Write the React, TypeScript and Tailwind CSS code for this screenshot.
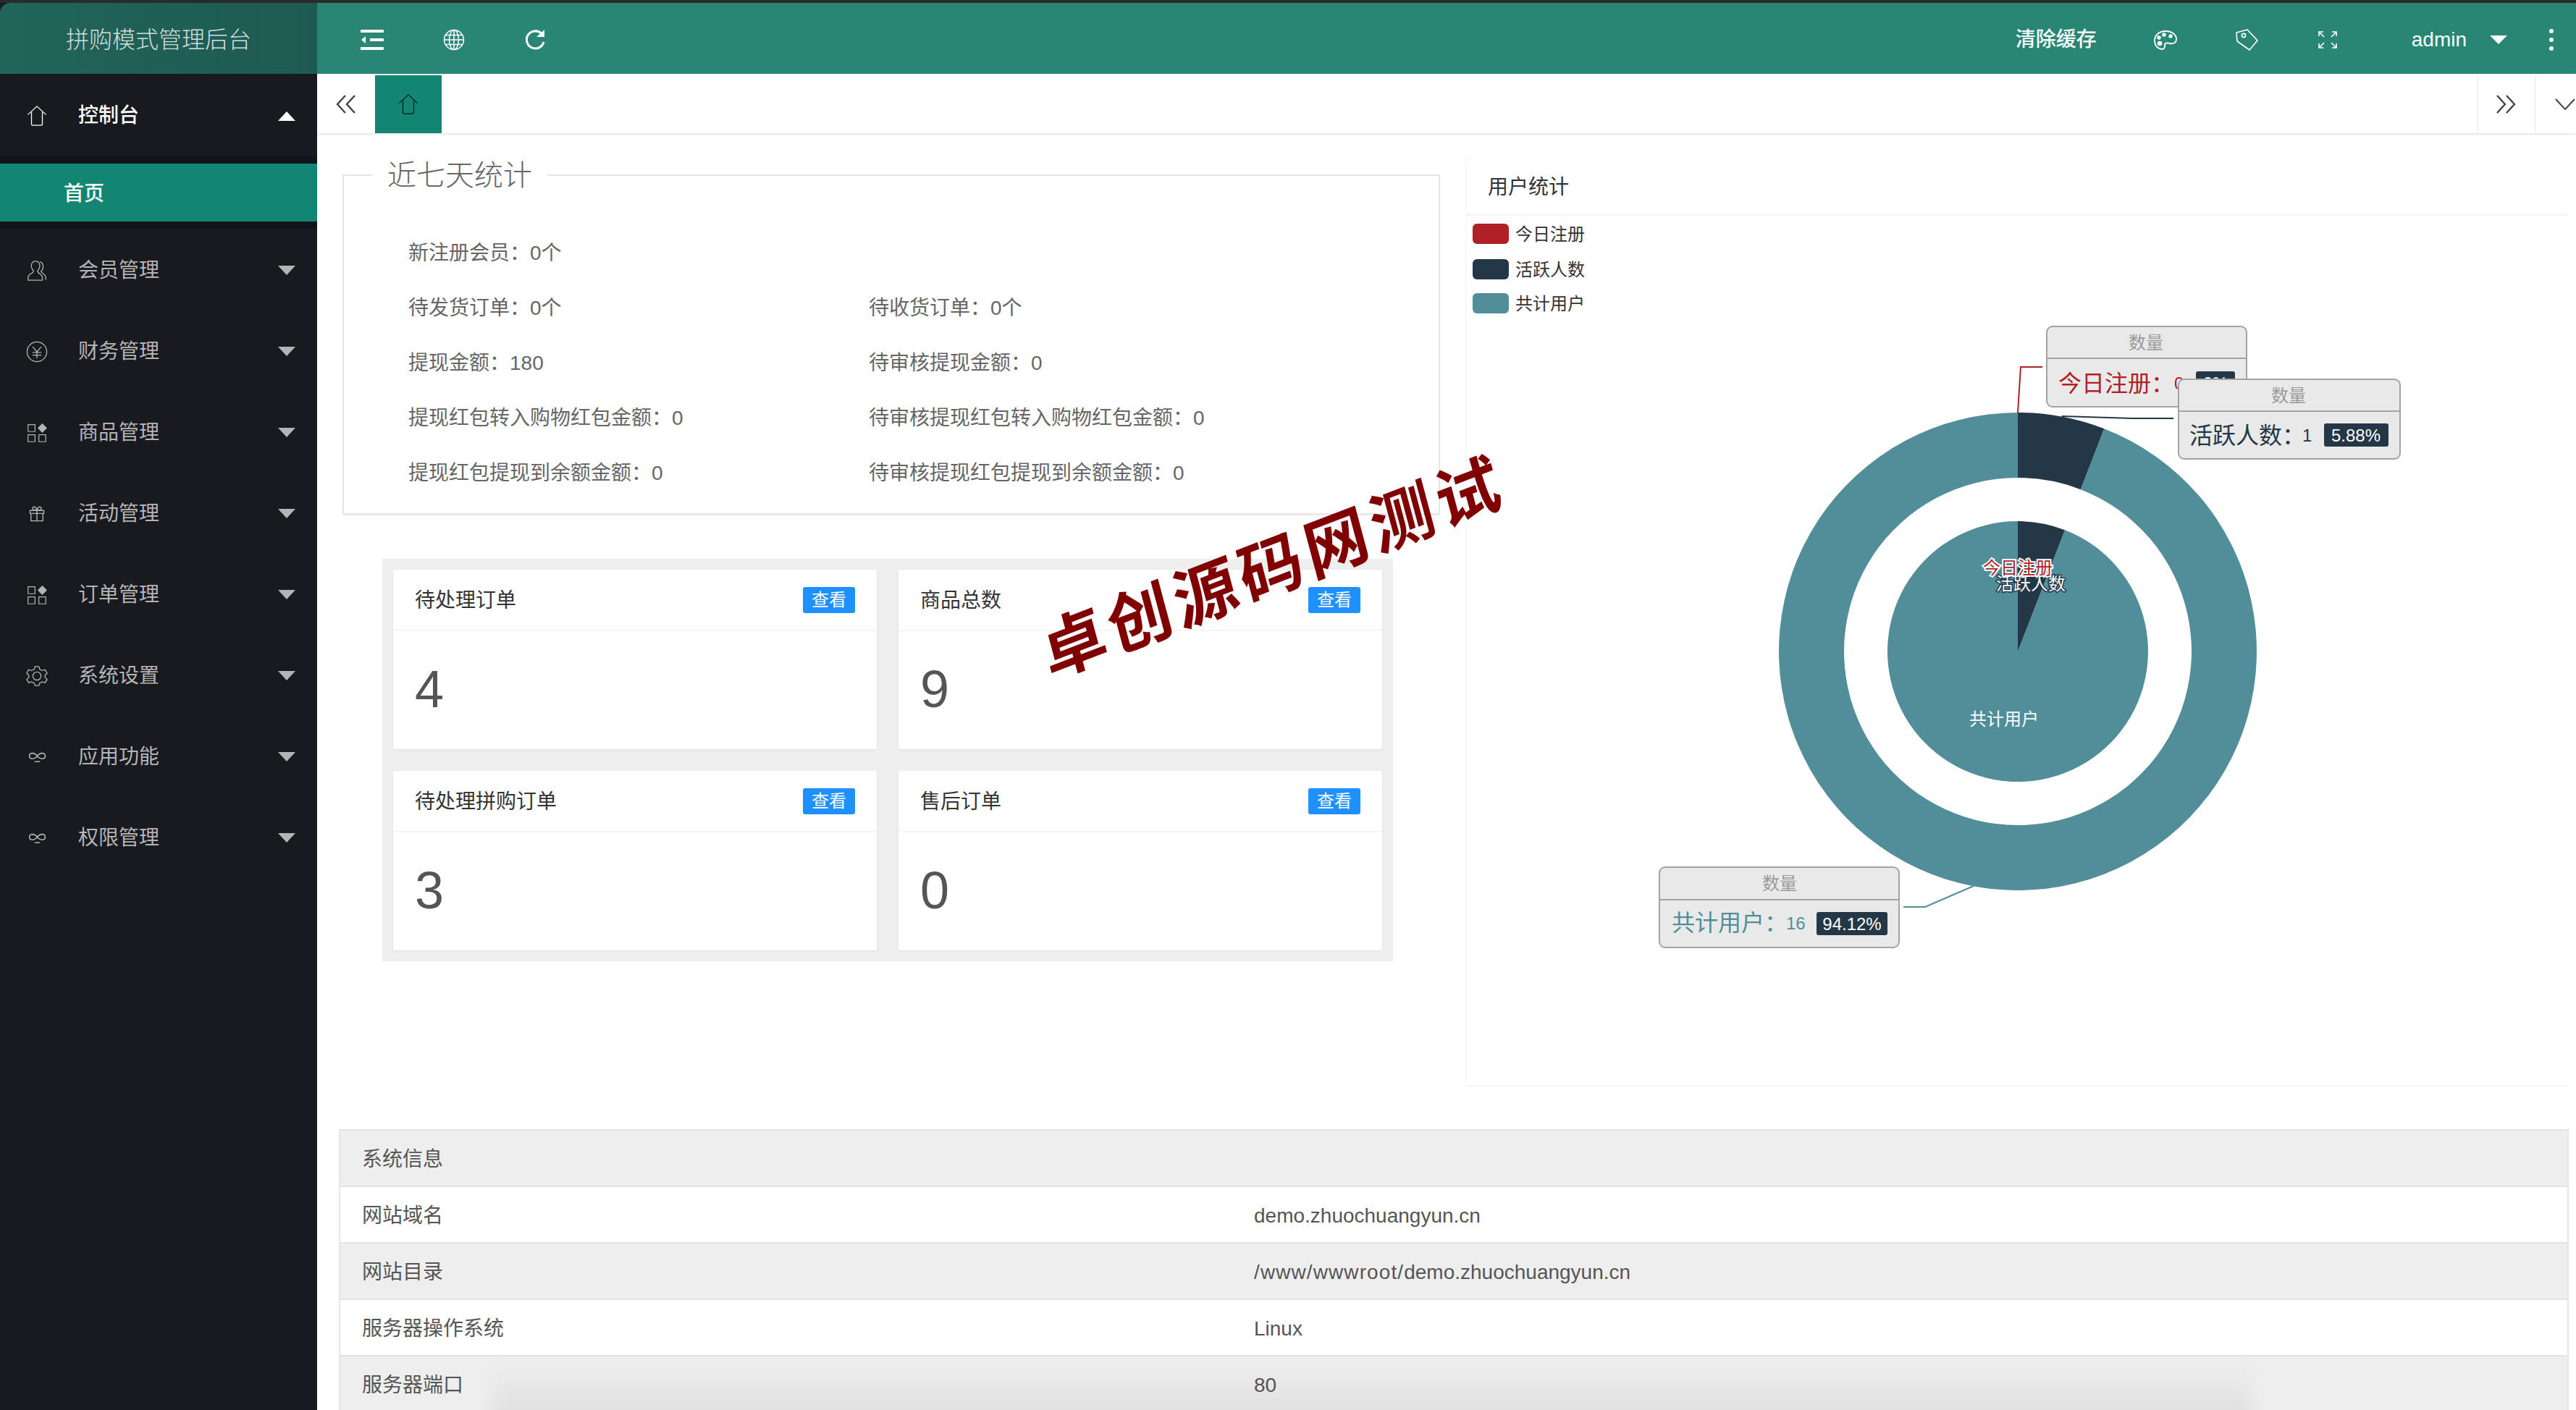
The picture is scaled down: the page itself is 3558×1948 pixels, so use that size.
import React from "react";

const S = { fill: "none", stroke: "currentColor", strokeWidth: 1.4, strokeLinejoin: "round" as const, strokeLinecap: "round" as const };

function HomeIcon({ className }: { className: string }) {
  return (
    <svg viewBox="0 0 32 32" className={className} {...S}>
      <path d="M3 14 L16 2 L29 14 M8 11 V28 Q8 30 10 30 H22 Q24 30 24 28 V11" />
    </svg>
  );
}
function UsersIcon() {
  return (
    <svg viewBox="0 0 32 32" className="w-[30px] h-[30px]" {...S}>
      <path d="M3 30 Q2 24 6 21 Q11 19 11 16 Q7 12 8 7 Q9 2 14 2 Q19 2 20 7 Q21 12 17 16 Q17 19 21 21 Q25 24 24 30 Z" />
      <path d="M21 3 Q26 5 25 12 Q24 16 22 17 Q23 19 26 21 Q30 24 29 29" />
    </svg>
  );
}
function YenIcon() {
  return (
    <svg viewBox="0 0 32 32" className="w-[30px] h-[30px]" {...S}>
      <circle cx="16" cy="16" r="14.5" />
      <path d="M10 9 L16 16 L22 9 M16 16 V25 M10 17 H22 M10 21 H22" />
    </svg>
  );
}
function AppsIcon() {
  return (
    <svg viewBox="0 0 32 32" className="w-[28px] h-[28px]" {...S}>
      <rect x="2" y="3" width="11" height="11" />
      <rect x="2" y="19" width="11" height="11" />
      <rect x="19" y="19" width="11" height="11" />
      <path d="M24.5 2 L31 8.5 L24.5 15 L18 8.5 Z" fill="currentColor" />
    </svg>
  );
}
function GiftIcon() {
  return (
    <svg viewBox="0 0 32 32" className="w-[22px] h-[22px]" {...S} strokeWidth={2}>
      <rect x="2" y="9" width="28" height="6" rx="1" />
      <path d="M4 15 V30 H28 V15 M16 9 V30 M16 9 Q8 9 7 5 Q8 1 12 2 Q15 4 16 9 Q17 4 20 2 Q24 1 25 5 Q24 9 16 9" />
    </svg>
  );
}
function GearIcon() {
  return (
    <svg viewBox="0 0 32 32" className="w-[30px] h-[30px]" {...S}>
      <circle cx="16" cy="16" r="6" />
      <path d="M13 2 H19 L20 6 L24 8 L28 6.5 L31 12 L28 15 V18 L31 21 L28 26 L24 24.5 L20 26.5 L19 30 H13 L12 26.5 L8 24.5 L4 26 L1 21 L4 18 V15 L1 12 L4 6.5 L8 8 L12 6 Z" />
    </svg>
  );
}
function InfinityIcon() {
  return (
    <svg viewBox="0 0 32 20" className="w-[25px] h-[16px]" {...S} strokeWidth={2}>
      <path d="M16 8 C12 2 2 1 2 8 C2 15 12 14 16 8 C20 2 30 1 30 8 C30 15 20 14 16 8" />
      <path d="M12 18 H20" />
    </svg>
  );
}

const menu: { label: string; icon: React.ReactNode }[] = [
  { label: "会员管理", icon: <UsersIcon /> },
  { label: "财务管理", icon: <YenIcon /> },
  { label: "商品管理", icon: <AppsIcon /> },
  { label: "活动管理", icon: <GiftIcon /> },
  { label: "订单管理", icon: <AppsIcon /> },
  { label: "系统设置", icon: <GearIcon /> },
  { label: "应用功能", icon: <InfinityIcon /> },
  { label: "权限管理", icon: <InfinityIcon /> },
];

function Sidebar() {
  return (
    <aside className="w-[438px] shrink-0 bg-[#181a20] flex flex-col">
      <div className="h-[98px] shrink-0 pt-[3px] bg-gradient-to-r from-[#20655a] to-[#1e5a52] rounded-tl-[14px] flex items-center pl-[91px] text-[32px] font-light text-[#d5dedc]">
        拼购模式管理后台
      </div>
      <div className="h-[113px] pt-[3px] flex items-center text-white text-[28px]">
        <span className="w-[108px] flex justify-center">
          <HomeIcon className="w-[30px] h-[30px] -ml-[6px]" />
        </span>
        <span className="flex-1 font-medium">控制台</span>
        <span className="w-0 h-0 mr-[30px] border-x-[12px] border-x-transparent border-b-[13px] border-b-white" />
      </div>
      <div className="bg-[#13141a] pt-[11px] pb-[10px]">
        <div className="h-[80px] pt-[3px] bg-[#128672] flex items-center pl-[88px] text-white text-[28px] font-medium">首页</div>
      </div>
      {menu.map((m) => (
        <div key={m.label} className="h-[112px] pt-[3px] shrink-0 flex items-center text-[#b4b4b4] text-[28px]">
          <span className="w-[108px] flex justify-center">
            <span className="w-[30px] h-[30px] -ml-[6px] flex items-center justify-center">{m.icon}</span>
          </span>
          <span className="flex-1">{m.label}</span>
          <span className="w-0 h-0 mr-[30px] border-x-[12px] border-x-transparent border-t-[13px] border-t-[#b4b4b4]" />
        </div>
      ))}
    </aside>
  );
}

function Header() {
  return (
    <header className="h-[98px] shrink-0 pt-[3px] bg-[#2a8674] flex items-center text-white">
      <svg viewBox="0 0 32 28" className="ml-[60px] w-[32px] h-[28px]" fill="currentColor">
        <rect x="0" y="0" width="32" height="4" />
        <rect x="0" y="24" width="32" height="4" />
        <rect x="13" y="12" width="19" height="4" />
        <path d="M1 14 L7 9 V19 Z" />
      </svg>
      <svg viewBox="0 0 30 30" className="ml-[82px] w-[30px] h-[30px]" fill="none" stroke="currentColor" strokeWidth="1.5">
        <circle cx="15" cy="15" r="13.5" />
        <ellipse cx="15" cy="15" rx="6.5" ry="13.5" />
        <path d="M15 1.5 V28.5 M1.5 15 H28.5 M3.5 8.5 H26.5 M3.5 21.5 H26.5" />
      </svg>
      <svg viewBox="0 0 30 30" className="ml-[82px] w-[30px] h-[30px]" fill="none" stroke="currentColor" strokeWidth="3">
        <path d="M24 6.5 A12 12 0 1 0 27 18" />
        <path d="M17 11 H28 V1 Z" fill="currentColor" stroke="none" />
      </svg>
      <div className="ml-auto flex items-center">
        <span className="text-[28px] font-medium">清除缓存</span>
        <svg viewBox="0 0 32 28" className="ml-[79px] w-[32px] h-[28px]" fill="none" stroke="currentColor" strokeWidth="1.8">
          <path d="M16 2 C6 2 1 9 1 15 C1 23 7 27 11 27 C15 27 15 24 15 21 C15 18 19 18 22 19 C27 20 31 18 31 13 C31 7 25 2 16 2 Z" />
          <circle cx="8" cy="19" r="2.4" fill="currentColor" />
          <circle cx="7" cy="11" r="1.8" fill="currentColor" />
          <circle cx="14" cy="7" r="1.8" fill="currentColor" />
          <circle cx="23" cy="9" r="1.8" fill="currentColor" />
        </svg>
        <svg viewBox="0 0 32 30" className="ml-[80px] w-[32px] h-[30px]" fill="none" stroke="currentColor" strokeWidth="1.6" strokeLinejoin="round">
          <path d="M2 5 L17 1 L31 16 L20 29 L3 17 Z" />
          <circle cx="12" cy="9" r="2.6" />
        </svg>
        <svg viewBox="0 0 26 24" className="ml-[83px] w-[26px] h-[24px]" fill="none" stroke="currentColor" strokeWidth="1.6">
          <path d="M1 7 V1 H7 M1 1 L8 8 M25 7 V1 H19 M25 1 L18 8 M1 17 V23 H7 M1 23 L8 16 M25 17 V23 H19 M25 23 L18 16" />
        </svg>
        <span className="ml-[103px] text-[28px]">admin</span>
        <span className="ml-[32px] w-0 h-0 border-x-[12px] border-x-transparent border-t-[12px] border-t-white" />
        <span className="ml-[58px] mr-[31px] flex flex-col gap-[6px]">
          <i className="block w-[6px] h-[6px] rounded-full bg-white" />
          <i className="block w-[6px] h-[6px] rounded-full bg-white" />
          <i className="block w-[6px] h-[6px] rounded-full bg-white" />
        </span>
      </div>
    </header>
  );
}

function TabBar() {
  return (
    <div className="h-[82px] shrink-0 pt-[2px] bg-white flex items-stretch shadow-[0_2px_3px_rgba(0,0,0,0.1)] relative">
      <div className="w-[80px] flex items-center justify-center text-[#444]">
        <svg viewBox="0 0 28 26" className="w-[28px] h-[26px]" fill="none" stroke="currentColor" strokeWidth="2.4">
          <path d="M13 1 L2 13 L13 25 M26 1 L15 13 L26 25" />
        </svg>
      </div>
      <div className="w-[92px] bg-[#128672] flex items-center justify-center text-[#0c1a18]">
        <HomeIcon className="w-[32px] h-[30px]" />
      </div>
      <div className="ml-auto w-[80px] border-l-2 border-[#f2f2f2] flex items-center justify-center pr-[3px] text-[#444]">
        <svg viewBox="0 0 28 26" className="w-[28px] h-[26px]" fill="none" stroke="currentColor" strokeWidth="2.4">
          <path d="M2 1 L13 13 L2 25 M15 1 L26 13 L15 25" />
        </svg>
      </div>
      <div className="w-[57px] border-l-2 border-[#f2f2f2] flex items-center pl-[26px] text-[#444]">
        <svg viewBox="0 0 28 16" className="w-[28px] h-[16px] shrink-0" fill="none" stroke="currentColor" strokeWidth="2">
          <path d="M1 1 L14 15 L27 1" />
        </svg>
      </div>
    </div>
  );
}

const rows: [string, string | null][] = [
  ["新注册会员：0个", null],
  ["待发货订单：0个", "待收货订单：0个"],
  ["提现金额：180", "待审核提现金额：0"],
  ["提现红包转入购物红包金额：0", "待审核提现红包转入购物红包金额：0"],
  ["提现红包提现到余额金额：0", "待审核提现红包提现到余额金额：0"],
];

function Stats() {
  return (
    <fieldset className="mt-[30px] ml-[35px] w-[1516px] border-2 border-[#e6e6e6] shadow-[0_2px_2px_rgba(0,0,0,0.06)]">
      <legend className="ml-[39px] px-[21px] text-[40px] leading-[56px] font-light text-[#666]">近七天统计</legend>
      <div className="pl-[89px] pt-[42px] pb-[17px] grid grid-cols-[636px_1fr] text-[28px] text-[#666]">
        {rows.map((r) => (
          <React.Fragment key={r[0]}>
            <div className="h-[76px] flex items-center">{r[0]}</div>
            <div className="h-[76px] flex items-center">{r[1]}</div>
          </React.Fragment>
        ))}
      </div>
    </fieldset>
  );
}

const cards = [
  ["待处理订单", "4"],
  ["商品总数", "9"],
  ["待处理拼购订单", "3"],
  ["售后订单", "0"],
];

function Cards() {
  return (
    <div className="mt-[61px] ml-[90px] w-[1396px] bg-[#eeeeee] p-[15px] grid grid-cols-2 gap-[30px]">
      {cards.map(([t, n]) => (
        <div key={t} className="h-[248px] bg-white rounded-[3px] shadow-[0_1px_3px_rgba(0,0,0,0.06)]">
          <div className="h-[85px] border-b-2 border-[#f5f5f5] flex items-center justify-between pl-[30px] pr-[30px]">
            <span className="text-[28px] text-[#333] pt-[3px]">{t}</span>
            <span className="w-[72px] h-[36px] rounded-[3px] bg-[#1e90ff] text-white text-[24px] flex items-center justify-center">查看</span>
          </div>
          <div className="pl-[30px] pt-[38px] text-[72px] leading-[84px] text-[#555]">{n}</div>
        </div>
      ))}
    </div>
  );
}

const RED = "#b02125";
const DARK = "#243746";
const TEAL = "#528e99";

function polar(r: number, deg: number) {
  const a = (deg * Math.PI) / 180;
  return [2787 + r * Math.sin(a), 900 - r * Math.cos(a)];
}
function ring(r0: number, r1: number, a0: number, a1: number) {
  const large = a1 - a0 > 180 ? 1 : 0;
  const [x0, y0] = polar(r1, a0);
  const [x1, y1] = polar(r1, a1);
  const [x2, y2] = polar(r0, a1);
  const [x3, y3] = polar(r0, a0);
  const inner = r0 > 0 ? `L${x2} ${y2} A${r0} ${r0} 0 ${large} 0 ${x3} ${y3}` : `L2787 900`;
  return `M${x0} ${y0} A${r1} ${r1} 0 ${large} 1 ${x1} ${y1} ${inner} Z`;
}

function LabelBox({ x, y, w, h, head, titleX, children }: { x: number; y: number; w: number; h: number; head: number; titleX: number; children: React.ReactNode }) {
  return (
    <g>
      <rect x={x} y={y} width={w} height={h} rx={8} fill="#e9e9e9" stroke="#a3a3a3" strokeWidth={2} />
      <path d={`M${x} ${head} H${x + w}`} stroke="#a3a3a3" strokeWidth={2} />
      <text x={titleX} y={y + 31} textAnchor="middle" fontSize={24} fill="#999">数量</text>
      {children}
    </g>
  );
}

function Chart() {
  const split = 21.18;
  return (
    <div className="flex-1 mt-[34px] mr-[10px] border-l-2 border-b-2 border-[#f7f7f7] flex flex-col min-w-0">
      <div className="h-[80px] shrink-0 border-b-2 border-[#f3f3f3] flex items-center pl-[29px] pt-[4px] text-[28px] text-[#333]">用户统计</div>
      <svg viewBox="2026 300 1522 1200" className="mt-[2px] w-[1522px] h-[1200px] overflow-visible">
        {[
          [RED, "今日注册", 309],
          [DARK, "活跃人数", 358],
          [TEAL, "共计用户", 405],
        ].map(([c, t, y]) => (
          <g key={t as string}>
            <rect x={2034} y={y as number} width={50} height={28} rx={6} fill={c as string} />
            <text x={2093} y={(y as number) + 23} fontSize={24} fill="#333">{t}</text>
          </g>
        ))}

        <path d={ring(240, 330, split, 360)} fill={TEAL} />
        <path d={ring(240, 330, 0, split)} fill={DARK} />
        <path d={ring(0, 180, split, 360)} fill={TEAL} />
        <path d={ring(0, 180, 0, split)} fill={DARK} />

        <text x={2805} y={815} textAnchor="middle" fontSize={24} fill="#fff" stroke={DARK} strokeWidth={3} className="[paint-order:stroke]">活跃人数</text>
        <text x={2787} y={793} textAnchor="middle" fontSize={24} fill={RED} stroke="#fff" strokeWidth={4} className="[paint-order:stroke]">今日注册</text>
        <text x={2768} y={1002} textAnchor="middle" fontSize={24} fill="#fff">共计用户</text>

        <path d="M2787 570 L2791 507 H2821" fill="none" stroke={RED} strokeWidth={2} />
        <path d="M2848 575 L2946 578 H3002" fill="none" stroke={DARK} strokeWidth={2} />
        <path d="M2726 1224 L2659 1253 H2629" fill="none" stroke={TEAL} strokeWidth={2} />

        <LabelBox x={2827} y={451} w={276} h={111} head={495} titleX={2964}>
          <text x={2843} y={541} fontSize={32} fill={RED}>今日注册：</text>
          <text x={3003} y={538} fontSize={24} fill={RED}>0</text>
          <rect x={3033} y={513} width={54} height={32} rx={3} fill={DARK} />
          <text x={3060} y={538} textAnchor="middle" fontSize={24} fill="#fff">0%</text>
        </LabelBox>
        <LabelBox x={3009} y={524} w={306} h={110} head={568} titleX={3161}>
          <text x={3024} y={613} fontSize={32} fill={DARK}>活跃人数：</text>
          <text x={3180} y={610} fontSize={24} fill={DARK}>1</text>
          <rect x={3210} y={585} width={89} height={32} rx={3} fill={DARK} />
          <text x={3254} y={610} textAnchor="middle" fontSize={24} fill="#fff">5.88%</text>
        </LabelBox>
        <LabelBox x={2292} y={1198} w={331} h={111} head={1243} titleX={2458}>
          <text x={2309} y={1286} fontSize={32} fill={TEAL}>共计用户：</text>
          <text x={2467} y={1284} fontSize={24} fill={TEAL}>16</text>
          <rect x={2509} y={1260} width={98} height={32} rx={3} fill={DARK} />
          <text x={2558} y={1285} textAnchor="middle" fontSize={24} fill="#fff">94.12%</text>
        </LabelBox>
      </svg>
    </div>
  );
}

const info: [string, React.ReactNode][] = [
  ["系统信息", ""],
  ["网站域名", "demo.zhuochuangyun.cn"],
  ["网站目录", <><span className="tracking-[1.1px]">/www/wwwroot/</span>demo.zhuochuangyun.cn</>],
  ["服务器操作系统", "Linux"],
  ["服务器端口", "80"],
];

function InfoTable() {
  return (
    <div className="mt-[59px] ml-[30px] mr-[10px] border-x-2 border-[#e6e6e6]">
      {info.map(([a, b], i) => (
        <div key={a} className={i % 2 === 0 ? "h-[78px] pt-[3px] border-t-2 border-[#e2e2e2] bg-[#eeeeee] flex items-center text-[28px] text-[#555]" : "h-[78px] pt-[3px] border-t-2 border-[#e2e2e2] bg-white flex items-center text-[28px] text-[#555]"}>
          <span className="w-[1262px] pl-[30px]">{a}</span>
          <span>{b}</span>
        </div>
      ))}
    </div>
  );
}

export default function App() {
  return (
    <div className="relative w-[3558px] h-[1948px] overflow-hidden bg-[#2b2b2b] pt-[4px] font-['Liberation_Sans','Noto_Sans_CJK_SC',sans-serif]">
      <div className="flex h-[1944px]">
        <Sidebar />
        <main className="flex-1 min-w-0 flex flex-col bg-white">
          <Header />
          <TabBar />
          <div className="h-[1317px] shrink-0 flex">
            <div className="w-[1586px] shrink-0">
              <Stats />
              <Cards />
            </div>
            <Chart />
          </div>
          <InfoTable />
        </main>
      </div>
      <div className="absolute left-[680px] top-[1885px] w-[2430px] h-[80px] bg-gradient-to-b from-transparent to-black/[0.07] blur-[12px] pointer-events-none" />
      <div className="absolute left-[1404px] top-[740px] w-[710px] text-center -rotate-[21deg] -skew-x-[6deg] font-bold text-[90px] tracking-[7px] leading-none text-[#800000] whitespace-nowrap">
        卓创源码网测试
      </div>
    </div>
  );
}
